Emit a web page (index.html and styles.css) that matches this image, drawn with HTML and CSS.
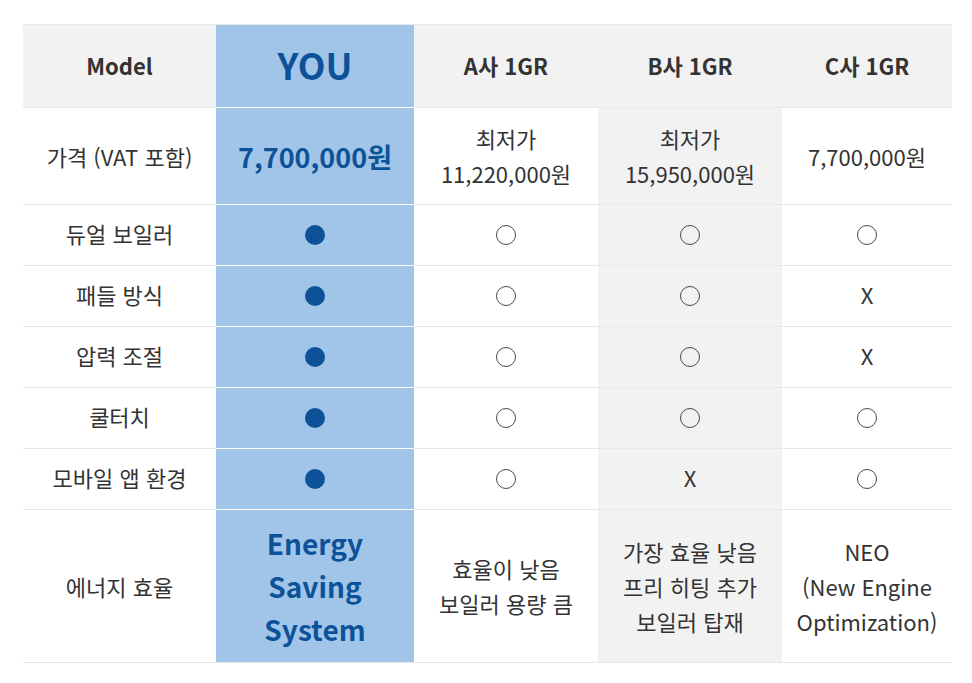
FILE: index.html
```html
<!DOCTYPE html>
<html lang="ko">
<head>
<meta charset="utf-8">
<link rel="stylesheet" href="styles.css">
</head>
<body>
<div class="wrap">
<table class="cmp">
  <colgroup>
    <col class="c-model"><col class="c-you"><col class="c-a"><col class="c-b"><col class="c-c">
  </colgroup>
  <thead>
    <tr class="head">
      <th>Model</th>
      <th class="you you-title">YOU</th>
      <th>A사 1GR</th>
      <th class="bcol">B사 1GR</th>
      <th>C사 1GR</th>
    </tr>
  </thead>
  <tbody>
    <tr class="price">
      <td>가격 (VAT 포함)</td>
      <td class="you you-price">7,700,000원</td>
      <td>최저가<br>11,220,000원</td>
      <td class="bcol">최저가<br>15,950,000원</td>
      <td>7,700,000원</td>
    </tr>
    <tr class="row">
      <td>듀얼 보일러</td>
      <td class="you"><span class="dot"></span></td>
      <td><span class="ring"></span></td>
      <td class="bcol"><span class="ring"></span></td>
      <td><span class="ring"></span></td>
    </tr>
    <tr class="row">
      <td>패들 방식</td>
      <td class="you"><span class="dot"></span></td>
      <td><span class="ring"></span></td>
      <td class="bcol"><span class="ring"></span></td>
      <td>X</td>
    </tr>
    <tr class="row">
      <td>압력 조절</td>
      <td class="you"><span class="dot"></span></td>
      <td><span class="ring"></span></td>
      <td class="bcol"><span class="ring"></span></td>
      <td>X</td>
    </tr>
    <tr class="row">
      <td>쿨터치</td>
      <td class="you"><span class="dot"></span></td>
      <td><span class="ring"></span></td>
      <td class="bcol"><span class="ring"></span></td>
      <td><span class="ring"></span></td>
    </tr>
    <tr class="row">
      <td>모바일 앱 환경</td>
      <td class="you"><span class="dot"></span></td>
      <td><span class="ring"></span></td>
      <td class="bcol">X</td>
      <td><span class="ring"></span></td>
    </tr>
    <tr class="last">
      <td>에너지 효율</td>
      <td class="you you-energy">Energy<br>Saving<br>System</td>
      <td>효율이 낮음<br>보일러 용량 큼</td>
      <td class="bcol">가장 효율 낮음<br>프리 히팅 추가<br>보일러 탑재</td>
      <td>NEO<br>(New Engine<br>Optimization)</td>
    </tr>
  </tbody>
</table>
</div>
</body>
</html>
```
FILE: styles.css
```css
* { box-sizing: border-box; }
html, body { margin: 0; padding: 0; background: #fff; }
body {
  font-family: "Noto Sans CJK KR", "Noto Sans", sans-serif;
  color: #333;
}
.wrap { padding: 24px 0 0 23px; }
.cmp {
  width: 929px;
  border-collapse: separate;
  border-spacing: 0;
  border-top: 1px solid #e8e8e8;
  table-layout: fixed;
}
.c-model { width: 193px; }
.c-you { width: 198px; }
.c-a { width: 184px; }
.c-b { width: 184px; }
.c-c { width: 170px; }
.cmp th, .cmp td {
  padding: 0;
  text-align: center;
  vertical-align: middle;
  border-bottom: 1px solid #e8e8e8;
  font-size: 22px;
  line-height: 35px;
}
.cmp th { font-weight: 700; background: #f2f2f2; }
.head th { height: 83px; padding-bottom: 2px; }
.price td { height: 97px; }
.row td { height: 61px; padding-bottom: 3px; }
.last td { height: 153px; }
.bcol { background: #f2f2f2; }
.cmp .you { background: #a0c5e8; border-bottom-color: #fff; color: #0d5299; font-weight: 700; }
.cmp .last .you { border-bottom-color: #e8e8e8; }
.cmp .you-title { font-size: 36px; background: #a0c5e8; padding-bottom: 4px; }
.cmp .you-price { font-size: 27px; }
.cmp .you-energy { font-size: 28px; line-height: 43px; }
.dot {
  display: block;
  margin: 3px auto 0;
  width: 20px; height: 20px;
  border-radius: 50%;
  background: #0d5299;
}
.ring {
  display: block;
  margin: 3px auto 0;
  width: 20px; height: 20px;
  border-radius: 50%;
  border: 1.2px solid #4a4a4a;
}
```
